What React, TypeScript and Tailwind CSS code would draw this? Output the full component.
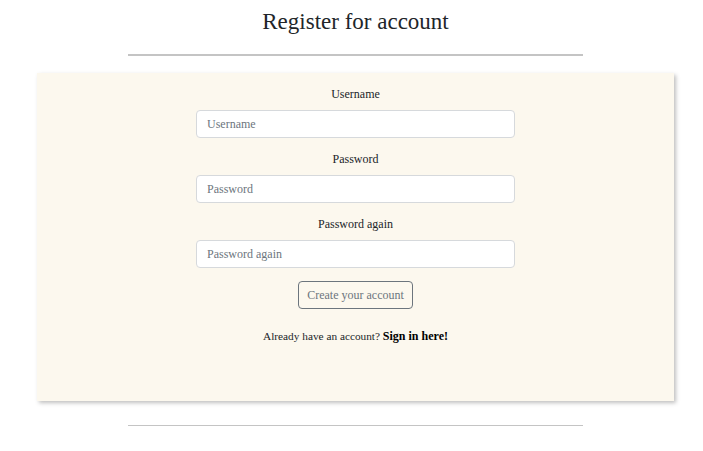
import React from "react";

const serif = { fontFamily: '"Liberation Serif", "DejaVu Serif", serif' };

function Field({ label, placeholder, type }: { label: string; placeholder: string; type: string }) {
  return (
    <div className="flex flex-col items-center mb-[13px]">
      <label className="text-[12px] leading-[16px] text-[#212529] mb-[8px]">{label}</label>
      <input
        type={type}
        placeholder={placeholder}
        className="w-[319px] h-[28px] bg-white border border-[#d6d9dc] rounded-[4px] px-[10px] text-[12px] text-[#495057] placeholder:text-[#6c757d] outline-none"
        style={serif}
      />
    </div>
  );
}

export default function App() {
  return (
    <div className="w-[703px] min-h-[451px] bg-white overflow-hidden" style={serif}>
      <div className="w-[711px]">
        <div className="h-[44px] flex items-center justify-center">
          <h1 className="text-[23px] leading-[30px] text-[#212529]">Register for account</h1>
        </div>
        <div className="mx-auto w-[455px] h-[2px] bg-[#c4c4c4] mt-[10px]" />
        <div className="mx-auto w-[637px] h-[328px] mt-[17px] bg-[#fcf8ee] shadow-[2px_2px_4px_rgba(0,0,0,0.25)] pt-[13px] flex flex-col items-center">
          <Field label="Username" placeholder="Username" type="text" />
          <Field label="Password" placeholder="Password" type="password" />
          <Field label="Password again" placeholder="Password again" type="password" />
          <button
            className="h-[28px] px-[8px] border border-[#6c757d] rounded-[4px] text-[12px] text-[#6c757d] bg-transparent"
            style={serif}
          >
            Create your account
          </button>
          <p className="mt-[19px] text-[11.3px] leading-[16px] text-[#212529]">
            Already have an account? <a className="font-bold text-[12px] text-black">Sign in here!</a>
          </p>
        </div>
        <div className="mx-auto w-[455px] h-px bg-[#c4c4c4] mt-[24px]" />
      </div>
    </div>
  );
}
